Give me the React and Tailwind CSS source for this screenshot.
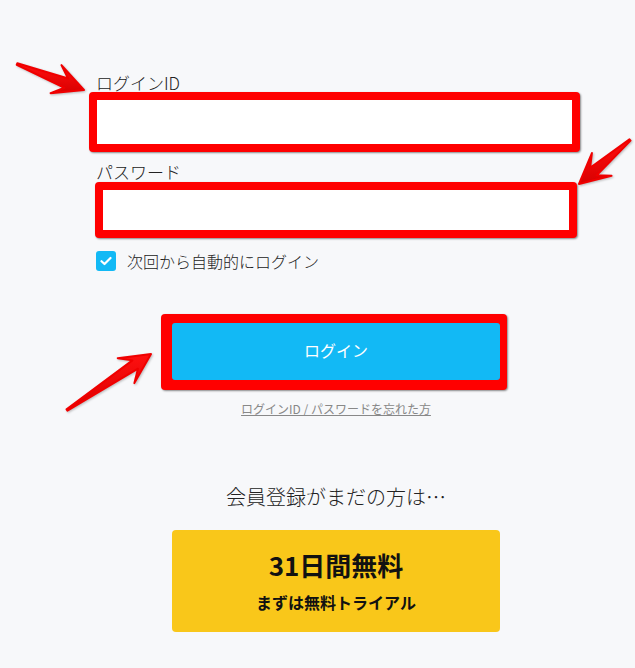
import React from 'react';

// red annotation arrows (tail -> tip)
const arrows = [
  [[17, 64], [84, 90]],
  [[630, 140], [579, 184]],
  [[67, 410], [151, 354]],
];

function arrowPoints([x1, y1], [x2, y2]) {
  const dx = x2 - x1;
  const dy = y2 - y1;
  const len = Math.hypot(dx, dy);
  const ux = dx / len;
  const uy = dy / len;
  const nx = -uy;
  const ny = ux;
  const at = (d, w) => `${x1 + ux * d + nx * w},${y1 + uy * d + ny * w}`;
  return [
    at(0, 0.8),
    at(len - 19, 5),
    at(len - 30, 15),
    `${x2},${y2}`,
    at(len - 30, -15),
    at(len - 19, -5),
    at(0, -0.8),
  ].join(' ');
}

function Arrows() {
  return (
    <svg className="absolute inset-0 pointer-events-none" width="635" height="668">
      <defs>
        <linearGradient id="redGrad" x1="0" y1="0" x2="0" y2="1">
          <stop offset="0" stopColor="#ff1010" />
          <stop offset="1" stopColor="#d80000" />
        </linearGradient>
      </defs>
      {arrows.map(([tail, tip], i) => (
        <polygon
          key={i}
          points={arrowPoints(tail, tip)}
          fill="url(#redGrad)"
          stroke="#f00000"
          strokeWidth="2"
          strokeLinejoin="round"
          style={{ filter: 'drop-shadow(1px 1px 1px rgba(0,0,0,0.25))' }}
        />
      ))}
    </svg>
  );
}

export default function App() {
  return (
    <div
      className="relative min-h-screen w-full overflow-hidden bg-[#f7f8fa] text-[#222]"
      style={{ fontFamily: '"Noto Sans CJK JP", "Noto Sans", sans-serif' }}
    >
      <div className="pt-[73px]">
        <label className="ml-[96px] block h-[19px] text-[17px] font-light leading-[19px]">ログインID</label>
        <div className="ml-[89px] h-[60px] w-[491px] rounded-[4px] border-8 border-[#ff0000] bg-white shadow-[1px_1px_2px_rgba(0,0,0,0.45)]">
          <input type="text" className="h-full w-full bg-white outline-none" />
        </div>

        <label className="ml-[96px] mt-[9px] block h-[21px] text-[17px] font-light leading-[21px]">パスワード</label>
        <div className="ml-[95px] h-[56px] w-[482px] rounded-[4px] border-8 border-[#ff0000] bg-white shadow-[1px_1px_2px_rgba(0,0,0,0.45)]">
          <input type="password" className="h-full w-full bg-white outline-none" />
        </div>

        <div className="ml-[96px] mt-[12px] flex h-[22px] items-center gap-[11px]">
          <span className="flex h-[20px] w-[20px] items-center justify-center rounded-[3px] bg-[#12b9f5]">
            <svg width="12" height="10" viewBox="0 0 12 10" fill="none">
              <path d="M1.5 5.2 4.5 8 10.5 2" stroke="white" strokeWidth="2.2" strokeLinecap="round" strokeLinejoin="round" />
            </svg>
          </span>
          <span className="text-[16px] font-light leading-[22px]">次回から自動的にログイン</span>
        </div>

        <div className="ml-[161px] mt-[42px] w-[346px] rounded-[4px] bg-[#ff0000] pb-[10px] pl-[11px] pr-[7px] pt-[9px] shadow-[1px_1px_2px_rgba(0,0,0,0.45)]">
          <button className="flex h-[57px] w-full items-center justify-center rounded-[3px] bg-[#12b9f5] pb-[3px] text-[16px] text-white">
            ログイン
          </button>
        </div>

        <div className="ml-[172px] w-[328px] text-center">
          <a href="#" className="mt-[11px] inline-block text-[12px] leading-[16px] text-[#888] underline">
            ログインID / パスワードを忘れた方
          </a>
          <p className="mt-[64px] text-[20px] font-light leading-[28px] text-[#222]">会員登録がまだの方は…</p>
          <div className="mt-[19px] h-[102px] rounded-[4px] bg-[#f9c71a] pt-[19px] text-[#111]">
            <p className="text-[26px] font-bold leading-[32px]">31日間無料</p>
            <p className="mt-[10px] text-[16px] font-bold leading-[22px]">まずは無料トライアル</p>
          </div>
        </div>
      </div>
      <Arrows />
    </div>
  );
}
